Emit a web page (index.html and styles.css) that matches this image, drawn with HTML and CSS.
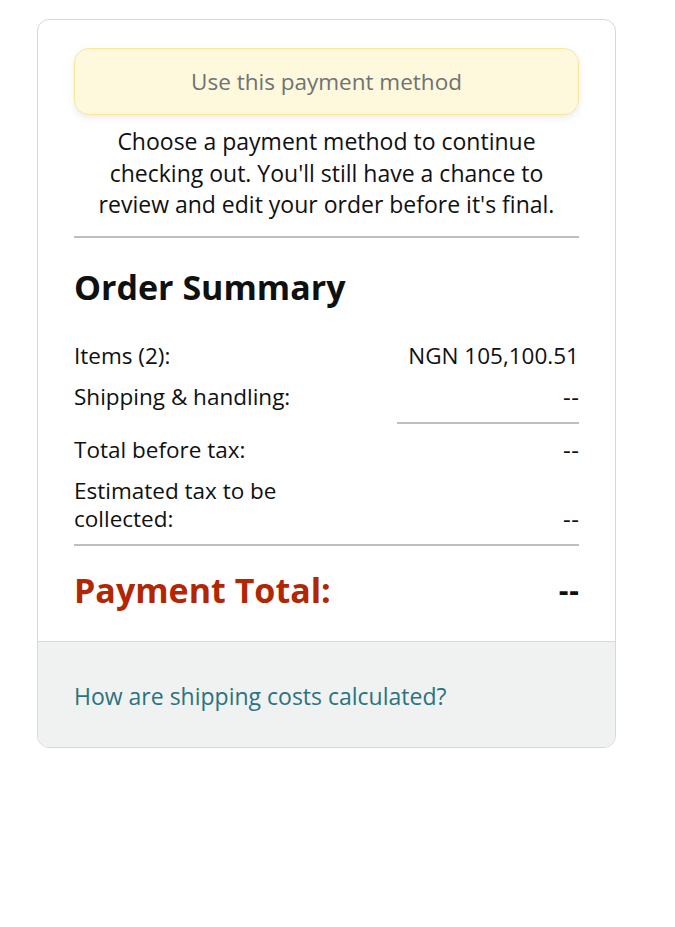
FILE: index.html
```html
<!DOCTYPE html>
<html>
<head>
<meta charset="utf-8">
<link rel="stylesheet" href="styles.css">
</head>
<body>
<div class="card">
  <div class="main">
    <button class="pay-btn">Use this payment method</button>
    <p class="note">Choose a payment method to continue<br>checking out. You'll still have a chance to<br>review and edit your order before it's final.</p>
    <hr class="rule">
    <h2 class="title">Order Summary</h2>
    <div class="rows">
      <div class="row"><span>Items (2):</span><span>NGN 105,100.51</span></div>
      <div class="row"><span>Shipping &amp; handling:</span><span class="dash">--</span></div>
      <div class="subrule-wrap"><div class="subrule"></div></div>
      <div class="row"><span>Total before tax:</span><span class="dash">--</span></div>
      <div class="row tall"><span class="lbl">Estimated tax to be collected:</span><span class="dash">--</span></div>
    </div>
    <hr class="rule rule2">
    <div class="total"><span>Payment Total:</span><span class="total-val">--</span></div>
  </div>
  <div class="foot">
    <a class="link" href="#">How are shipping costs calculated?</a>
  </div>
</div>
</body>
</html>
```
FILE: styles.css
```css
html, body { margin: 0; padding: 0; background: #fff; }
body {
  font-family: "Open Sans", "Liberation Sans", Arial, sans-serif;
  color: #0f1111;
  padding: 19px 0 0 37px;
}
.card {
  width: 577px;
  border: 1px solid #d5d9d9;
  border-radius: 12px;
  overflow: hidden;
}
.main { padding: 28px 36px 29px; }
.pay-btn {
  display: block;
  width: 100%;
  height: 67px;
  background: #fef8dc;
  border: 1px solid #fbe698;
  border-radius: 15px;
  box-shadow: 0 3px 6px rgba(213, 217, 217, 0.5);
  color: #6f7373;
  font-family: inherit;
  font-size: 22.5px;
}
.note {
  margin: 11px 0 0;
  text-align: center;
  font-size: 23px;
  line-height: 31.5px;
}
.rule { border: 0; border-top: 2px solid #bbbfbf; margin: 15px 0 0; }
.title { margin: 27px 0 0; font-size: 34px; font-weight: 700; line-height: 44px; }
.rows { margin-top: 33px; font-size: 22.5px; line-height: 28px; }
.row { display: flex; justify-content: space-between; align-items: flex-end; margin-bottom: 13px; }
.row .lbl { width: 250px; }
.dash { font-size: 24px; letter-spacing: 0.5px; margin-right: -0.5px; }
.subrule-wrap { display: flex; justify-content: flex-end; margin: -2px 0 12px; }
.subrule { width: 182px; border-top: 2px solid #bbbfbf; }
.row.tall { margin-bottom: 0; }
.rule2 { margin-top: 11px; }
.total {
  display: flex; justify-content: space-between; align-items: center;
  margin-top: 22px;
  font-size: 34px; font-weight: 700; color: #b12704; line-height: 44px;
}
.total-val { color: #0f1111; font-size: 30px; letter-spacing: 1px; margin-right: -1px; }
.foot {
  background: #f0f2f2;
  border-top: 1px solid #d5d9d9;
  padding: 39px 36px 36px;
  font-size: 23px;
  line-height: 30px;
}
.link { color: #2b7380; text-decoration: none; }
```
